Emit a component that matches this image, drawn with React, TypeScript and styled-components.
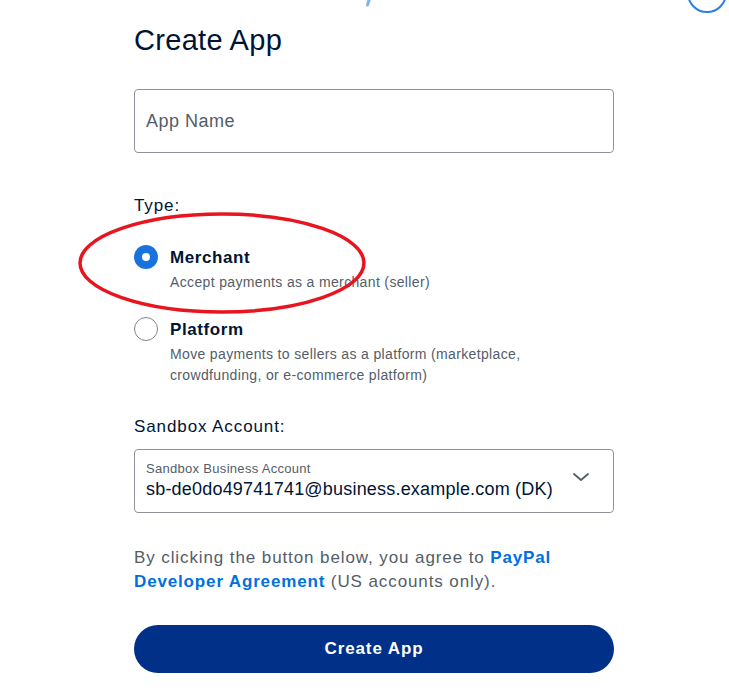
import styled, { createGlobalStyle } from "styled-components";

const GlobalStyle = createGlobalStyle`
  html, body {
    margin: 0;
    padding: 0;
    background: #ffffff;
  }
  body {
    font-family: "Liberation Sans", Arial, sans-serif;
    color: #001435;
  }
`;

const Page = styled.div`
  position: relative;
  width: 729px;
  height: 692px;
  overflow: hidden;
  background: #fff;
`;

const Form = styled.form`
  width: 480px;
  margin-left: 134px;
  padding-top: 22px;
  display: flex;
  flex-direction: column;
`;

const Title = styled.h1`
  margin: 0;
  font-size: 29px;
  line-height: 36px;
  font-weight: 400;
  letter-spacing: 0.3px;
  color: #001435;
`;

const Field = styled.div<{ $top: number }>`
  margin-top: ${(p) => p.$top}px;
  height: 64px;
  box-sizing: border-box;
  border: 1px solid #8f9399;
  border-radius: 4px;
  display: flex;
  align-items: center;
  padding: 0 12px 0 11px;
  position: relative;
`;

const Placeholder = styled.span`
  font-size: 18px;
  letter-spacing: 0.5px;
  color: #545d68;
`;

const Label = styled.div<{ $top: number }>`
  margin-top: ${(p) => p.$top}px;
  font-size: 17px;
  line-height: 24px;
  letter-spacing: 0.9px;
  color: #001435;
`;

const Options = styled.div`
  margin-top: 28px;
  display: flex;
  flex-direction: column;
  gap: 25px;
`;

const Option = styled.label`
  display: grid;
  grid-template-columns: 24px 1fr;
  column-gap: 12px;
  align-items: start;
`;

const Radio = styled.span<{ $checked?: boolean }>`
  width: 24px;
  height: 24px;
  box-sizing: border-box;
  border-radius: 50%;
  margin-top: -1px;
  display: flex;
  align-items: center;
  justify-content: center;
  background: ${(p) => (p.$checked ? "#1a73dc" : "#fff")};
  border: ${(p) => (p.$checked ? "none" : "1px solid #80868e")};
  &::after {
    content: "";
    display: ${(p) => (p.$checked ? "block" : "none")};
    width: 8px;
    height: 8px;
    border-radius: 50%;
    background: #fff;
  }
`;

const OptionText = styled.div`
  display: flex;
  flex-direction: column;
`;

const OptionName = styled.span`
  font-size: 17px;
  line-height: 24px;
  font-weight: 700;
  letter-spacing: 0.6px;
  color: #001435;
`;

const OptionHint = styled.span`
  font-size: 14px;
  line-height: 21px;
  letter-spacing: 0.35px;
  color: #545d68;
  margin-top: 2px;
`;

const SelectValue = styled.div`
  display: flex;
  flex-direction: column;
  flex: 1;
`;

const SelectCaption = styled.span`
  font-size: 13px;
  line-height: 16px;
  letter-spacing: 0.3px;
  color: #545d68;
`;

const SelectText = styled.span`
  font-size: 18px;
  line-height: 24px;
  letter-spacing: 0.2px;
  color: #001435;
`;

const Chevron = styled.svg`
  width: 20px;
  height: 20px;
  margin-right: 10px;
  margin-top: -8px;
`;

const Agreement = styled.p`
  margin: 33px 0 0;
  font-size: 17px;
  line-height: 24px;
  letter-spacing: 0.9px;
  color: #545d68;
`;

const AgreementLink = styled.a`
  color: #0070e0;
  font-weight: 700;
  letter-spacing: 0.85px;
  text-decoration: none;
`;

const Submit = styled.button`
  margin-top: 31px;
  height: 48px;
  border: none;
  border-radius: 24px;
  background: #003087;
  color: #fff;
  font-family: inherit;
  font-size: 17px;
  font-weight: 700;
  letter-spacing: 0.9px;
  cursor: pointer;
`;

const Annotation = styled.svg`
  position: absolute;
  left: 76px;
  top: 210px;
  width: 292px;
  height: 108px;
  pointer-events: none;
`;

const HeaderMark = styled.svg`
  position: absolute;
  left: 360px;
  top: 0;
  width: 16px;
  height: 8px;
`;

const HeaderRing = styled.svg`
  position: absolute;
  right: 0;
  top: 0;
  width: 44px;
  height: 16px;
`;

export default function App() {
  return (
    <Page>
      <GlobalStyle />
      <HeaderMark viewBox="0 0 16 8">
        <path d="M9 0 L7.5 5" stroke="#7db3f0" strokeWidth="3" strokeLinecap="round" />
      </HeaderMark>
      <HeaderRing viewBox="0 0 44 16">
        <circle cx="22" cy="-7" r="19" fill="none" stroke="#2b7fe0" strokeWidth="2" />
      </HeaderRing>

      <Form onSubmit={(e) => e.preventDefault()}>
        <Title>Create App</Title>

        <Field $top={31}>
          <Placeholder>App Name</Placeholder>
        </Field>

        <Label $top={41}>Type:</Label>

        <Options>
          <Option>
            <Radio $checked />
            <OptionText>
              <OptionName>Merchant</OptionName>
              <OptionHint>Accept payments as a merchant (seller)</OptionHint>
            </OptionText>
          </Option>
          <Option>
            <Radio />
            <OptionText>
              <OptionName>Platform</OptionName>
              <OptionHint>
                Move payments to sellers as a platform (marketplace,
                <br />
                crowdfunding, or e-commerce platform)
              </OptionHint>
            </OptionText>
          </Option>
        </Options>

        <Label $top={29}>Sandbox Account:</Label>

        <Field $top={10}>
          <SelectValue>
            <SelectCaption>Sandbox Business Account</SelectCaption>
            <SelectText>sb-de0do49741741@business.example.com (DK)</SelectText>
          </SelectValue>
          <Chevron viewBox="0 0 20 20">
            <path d="M3 7 L10 13 L17 7" fill="none" stroke="#545d68" strokeWidth="1.8" strokeLinecap="round" strokeLinejoin="round" />
          </Chevron>
        </Field>

        <Agreement>
          By clicking the button below, you agree to{" "}
          <AgreementLink href="#">PayPal Developer Agreement</AgreementLink> (US accounts only).
        </Agreement>

        <Submit type="submit">Create App</Submit>
      </Form>

      <Annotation viewBox="0 0 292 108">
        <ellipse cx="146" cy="53" rx="142" ry="49" fill="none" stroke="#e8151f" strokeWidth="3.5" />
      </Annotation>
    </Page>
  );
}
